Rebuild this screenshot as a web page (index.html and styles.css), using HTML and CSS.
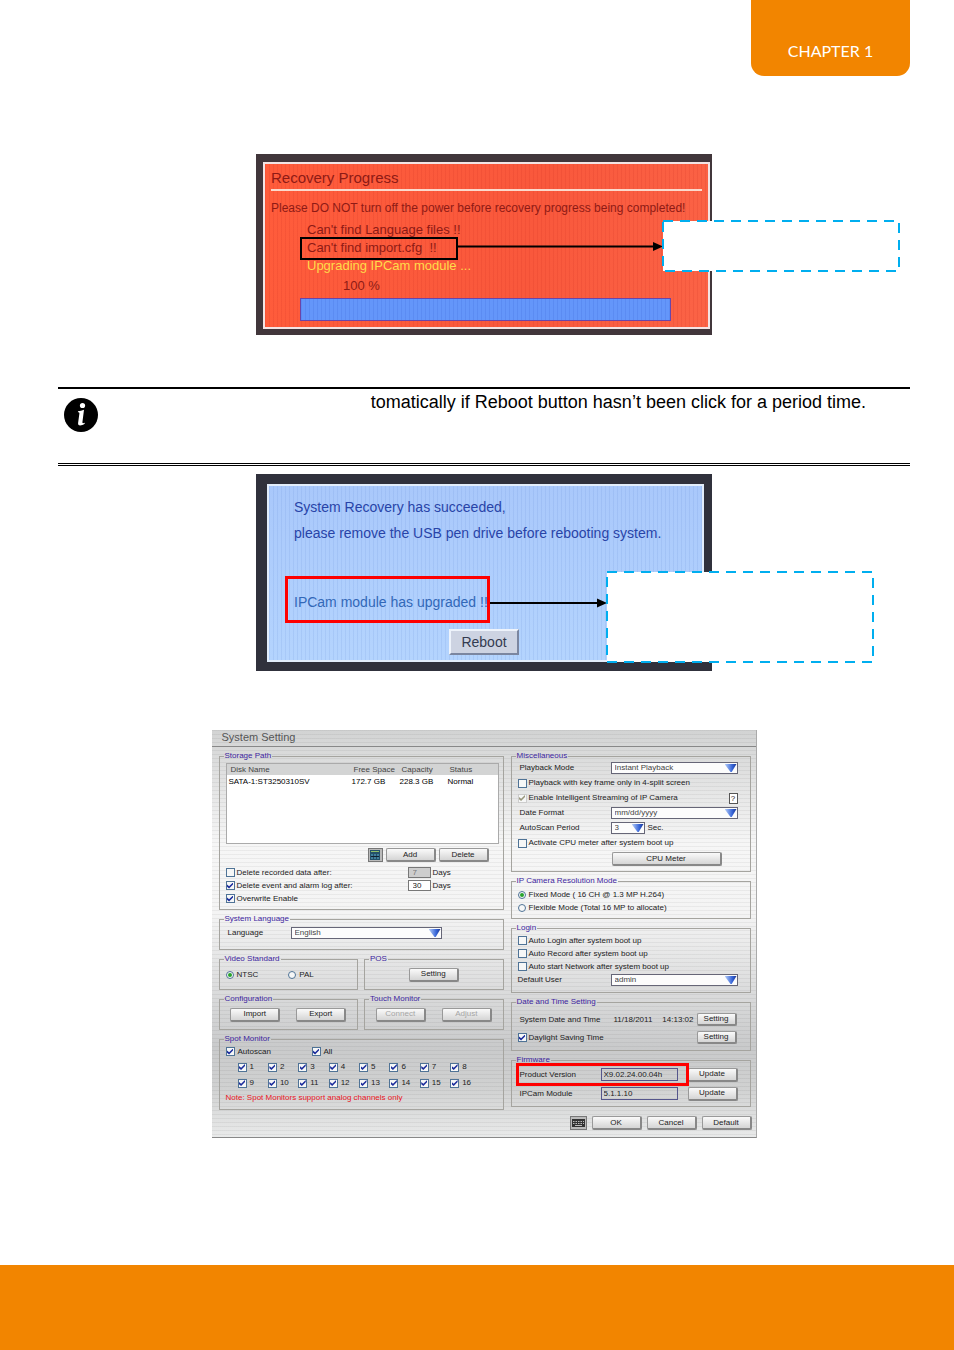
FILE: index.html
```html
<!DOCTYPE html>
<html lang="en">
<head>
    <meta charset="UTF-8">
    <meta name="viewport" content="width=device-width, initial-scale=1.0">
    <title>Chapter 1</title>
    <link rel="stylesheet" href="styles.css">
</head>
<body>
    <header class="page-header">
        <div class="chapter-tab">CHAPTER 1</div>
    </header>

    <main class="page-content">
        <figure class="photo photo-progress">
            <div class="screen screen-red">
                <h2>Recovery Progress</h2>
                <p class="warning">Please DO NOT turn off the power before recovery progress being completed!</p>
                <ul class="messages">
                    <li>Can't find Language files !!</li>
                    <li>Can't find import.cfg &nbsp;!!</li>
                    <li class="active">Upgrading IPCam module ...</li>
                </ul>
                <div class="percent">100 %</div>
                <div class="bar"></div>
            </div>
            <svg class="annotation" aria-hidden="true">
                <rect x="45" y="84" width="156" height="21" fill="none" stroke="#000" stroke-width="2"/>
                <path d="M202 92.500H400" stroke="#000" stroke-width="2"/>
                <path d="M397 88l10 4.500-10 4.500z" fill="#000"/>
                <rect x="407" y="67" width="236" height="50" fill="#fff" stroke="#00aeef" stroke-width="2" stroke-dasharray="10 7"/>
            </svg>
        </figure>

        <section class="note">
            <svg class="note-icon" viewBox="0 0 34 34" aria-hidden="true">
                <circle cx="17" cy="17" r="17" fill="#000"/>
                <circle cx="18.500" cy="7.500" r="2.600" fill="#fff"/>
                <path d="M14 13.200c2-.2 4-.6 6-1.400l-1.600 12.400c-.1 1 .6 1.300 2.300.6v.9c-1.500 1.100-3.200 1.700-4.600 1.700-1.600 0-2.200-.9-2-2.400l1.300-9.400c.1-1-.3-1.300-1.500-1.300z" fill="#fff"/>
            </svg>
            <p>tomatically if Reboot button hasn’t been click for a period time.</p>
        </section>

        <figure class="photo photo-done">
            <div class="screen screen-blue">
                <p>System Recovery has succeeded,</p>
                <p>please remove the USB pen drive before rebooting system.</p>
                <p class="upgraded">IPCam module has upgraded !!</p>
                <button type="button" class="reboot">Reboot</button>
            </div>
            <svg class="annotation" aria-hidden="true">
                <rect x="30.500" y="103.500" width="202" height="44" fill="none" stroke="#f00" stroke-width="3"/>
                <path d="M234 129H344" stroke="#000" stroke-width="2"/>
                <path d="M341 124.500l10 4.500-10 4.500z" fill="#000"/>
                <rect x="351" y="98" width="266" height="90" fill="#fff" stroke="#00aeef" stroke-width="2" stroke-dasharray="10 7"/>
            </svg>
        </figure>

        <form class="window">
            <h2>System Setting</h2>
            <div class="columns">
                <div class="column">
                    <fieldset class="storage">
                        <legend>Storage Path</legend>
                        <div class="disk-list">
                            <table>
                                <thead>
                                    <tr><th class="disk">Disk Name</th><th class="size">Free Space</th><th class="size">Capacity</th><th>Status</th></tr>
                                </thead>
                                <tbody>
                                    <tr><td>SATA-1:ST3250310SV</td><td>172.7 GB</td><td>228.3 GB</td><td>Normal</td></tr>
                                </tbody>
                            </table>
                        </div>
                        <div class="disk-buttons">
                            <button type="button" class="icon-btn" aria-label="Disk info">
                                <svg width="10" height="10" viewBox="0 0 10 10"><path d="M0 0h10v10H0z" fill="#24516a"/><path d="M1 1.500h8" stroke="#8fc06a"/><path d="M2 4v5M5 4v5M8 4v5" stroke="#5fb4d0"/><path d="M1 6.500h8" stroke="#123"/></svg>
                            </button>
                            <button type="button">Add</button>
                            <button type="button">Delete</button>
                        </div>
                        <div class="option">
                            <input type="checkbox" id="delRec"><label for="delRec" class="grow">Delete recorded data after:</label>
                            <input type="text" class="days" aria-label="Days to keep recorded data" value="7" disabled><span class="unit">Days</span>
                        </div>
                        <div class="option">
                            <input type="checkbox" id="delLog" checked><label for="delLog" class="grow">Delete event and alarm log after:</label>
                            <input type="text" class="days" aria-label="Days to keep logs" value="30"><span class="unit">Days</span>
                        </div>
                        <div class="option">
                            <input type="checkbox" id="overwrite" checked><label for="overwrite">Overwrite Enable</label>
                        </div>
                    </fieldset>

                    <fieldset class="small language">
                        <legend>System Language</legend>
                        <div class="row">
                            <label for="lang" class="name">Language</label>
                            <span class="select"><select id="lang"><option>English</option></select></span>
                        </div>
                    </fieldset>

                    <div class="pair">
                        <fieldset class="small">
                            <legend>Video Standard</legend>
                            <div class="row radios">
                                <span><input type="radio" name="video" id="ntsc" checked><label for="ntsc">NTSC</label></span>
                                <span><input type="radio" name="video" id="pal"><label for="pal">PAL</label></span>
                            </div>
                        </fieldset>
                        <fieldset class="small">
                            <legend>POS</legend>
                            <div class="row centered"><button type="button">Setting</button></div>
                        </fieldset>
                    </div>

                    <div class="pair">
                        <fieldset class="small">
                            <legend>Configuration</legend>
                            <div class="row centered"><button type="button">Import</button><button type="button">Export</button></div>
                        </fieldset>
                        <fieldset class="small">
                            <legend>Touch Monitor</legend>
                            <div class="row centered"><button type="button" disabled>Connect</button><button type="button" disabled>Adjust</button></div>
                        </fieldset>
                    </div>

                    <fieldset class="spot">
                        <legend>Spot Monitor</legend>
                        <div class="option spot-all">
                            <span><input type="checkbox" id="autoscan" checked><label for="autoscan">Autoscan</label></span>
                            <span><input type="checkbox" id="all" checked><label for="all">All</label></span>
                        </div>
                        <div class="channels">
                            <span><input type="checkbox" id="c1" checked><label for="c1">1</label></span>
                            <span><input type="checkbox" id="c2" checked><label for="c2">2</label></span>
                            <span><input type="checkbox" id="c3" checked><label for="c3">3</label></span>
                            <span><input type="checkbox" id="c4" checked><label for="c4">4</label></span>
                            <span><input type="checkbox" id="c5" checked><label for="c5">5</label></span>
                            <span><input type="checkbox" id="c6" checked><label for="c6">6</label></span>
                            <span><input type="checkbox" id="c7" checked><label for="c7">7</label></span>
                            <span><input type="checkbox" id="c8" checked><label for="c8">8</label></span>
                            <span><input type="checkbox" id="c9" checked><label for="c9">9</label></span>
                            <span><input type="checkbox" id="c10" checked><label for="c10">10</label></span>
                            <span><input type="checkbox" id="c11" checked><label for="c11">11</label></span>
                            <span><input type="checkbox" id="c12" checked><label for="c12">12</label></span>
                            <span><input type="checkbox" id="c13" checked><label for="c13">13</label></span>
                            <span><input type="checkbox" id="c14" checked><label for="c14">14</label></span>
                            <span><input type="checkbox" id="c15" checked><label for="c15">15</label></span>
                            <span><input type="checkbox" id="c16" checked><label for="c16">16</label></span>
                        </div>
                        <p class="spot-note">Note: Spot Monitors support analog channels only</p>
                    </fieldset>
                </div>

                <div class="column">
                    <fieldset class="misc">
                        <legend>Miscellaneous</legend>
                        <div class="row">
                            <label for="playback" class="name">Playback Mode</label>
                            <span class="select"><select id="playback"><option>Instant Playback</option></select></span>
                        </div>
                        <div class="row"><input type="checkbox" id="keyframe"><label for="keyframe">Playback with key frame only in 4-split screen</label></div>
                        <div class="row">
                            <input type="checkbox" id="stream" checked disabled><label for="stream" class="grow">Enable Intelligent Streaming of IP Camera</label>
                            <button type="button" class="help">?</button>
                        </div>
                        <div class="row">
                            <label for="dateFmt" class="name">Date Format</label>
                            <span class="select"><select id="dateFmt"><option>mm/dd/yyyy</option></select></span>
                        </div>
                        <div class="row">
                            <label for="period" class="name">AutoScan Period</label>
                            <span class="select narrow"><select id="period"><option>3</option></select></span>
                            <span class="unit">Sec.</span>
                        </div>
                        <div class="row"><input type="checkbox" id="cpu"><label for="cpu">Activate CPU meter after system boot up</label></div>
                        <div class="row cpu-row"><button type="button" class="wide">CPU Meter</button></div>
                    </fieldset>

                    <fieldset class="resolution">
                        <legend>IP Camera Resolution Mode</legend>
                        <div class="option"><input type="radio" name="res" id="fixed" checked><label for="fixed">Fixed Mode ( 16 CH @ 1.3 MP H.264)</label></div>
                        <div class="option"><input type="radio" name="res" id="flex"><label for="flex">Flexible Mode (Total 16 MP to allocate)</label></div>
                    </fieldset>

                    <fieldset class="login">
                        <legend>Login</legend>
                        <div class="option"><input type="checkbox" id="autoLogin"><label for="autoLogin">Auto Login after system boot up</label></div>
                        <div class="option"><input type="checkbox" id="autoRec"><label for="autoRec">Auto Record after system boot up</label></div>
                        <div class="option"><input type="checkbox" id="autoNet"><label for="autoNet">Auto start Network after system boot up</label></div>
                        <div class="row">
                            <label for="user" class="name flush">Default User</label>
                            <span class="select"><select id="user"><option>admin</option></select></span>
                        </div>
                    </fieldset>

                    <fieldset class="datetime">
                        <legend>Date and Time Setting</legend>
                        <div class="row">
                            <span class="name">System Date and Time</span>
                            <span class="clock"><span>11/18/2011</span><span>14:13:02</span></span>
                            <button type="button" class="mini">Setting</button>
                        </div>
                        <div class="row">
                            <input type="checkbox" id="dst" checked><label for="dst" class="grow">Daylight Saving Time</label>
                            <button type="button" class="mini">Setting</button>
                        </div>
                    </fieldset>

                    <fieldset class="firmware">
                        <legend>Firmware</legend>
                        <div class="row marked">
                            <label for="version" class="name">Product Version</label>
                            <input type="text" id="version" class="version" value="X9.02.24.00.04h" readonly>
                            <button type="button">Update</button>
                        </div>
                        <div class="row">
                            <label for="ipcam" class="name">IPCam Module</label>
                            <input type="text" id="ipcam" class="version" value="5.1.1.10" readonly>
                            <button type="button">Update</button>
                        </div>
                    </fieldset>
                </div>
            </div>
            <div class="window-buttons">
                <button type="button" class="icon-btn keyboard" aria-label="Keyboard">
                    <svg width="13" height="8" viewBox="0 0 13 8"><path d="M0 0h13v8H0z" fill="#333"/><path d="M1 2.500h11M1 4.500h11" stroke="#bbb" stroke-dasharray="1.500 1"/><path d="M3 6.500h7" stroke="#bbb"/></svg>
                </button>
                <button type="button">OK</button>
                <button type="button">Cancel</button>
                <button type="button">Default</button>
            </div>
        </form>
    </main>

    <footer class="page-footer"></footer>
</body>
</html>
```
FILE: styles.css
```css
* {
    box-sizing: border-box;
}
body {
    margin: 0;
    min-height: 100vh;
    display: flex;
    flex-direction: column;
    background: #fff;
    color: #000;
    font-family: "Liberation Sans", Arial, sans-serif;
}
h2, p, ul, figure {
    margin: 0;
    padding: 0;
}
.page-header {
    display: flex;
    justify-content: flex-end;
    padding: 0 44px;
}
.chapter-tab {
    width: 159px;
    height: 76px;
    padding-top: 40px;
    border-radius: 0 0 13px 13px;
    background: #f28500;
    color: #fff;
    font-family: Lato, sans-serif;
    font-size: 16px;
    line-height: 22px;
    text-align: center;
}
.page-content {
    flex: 1;
    padding: 78px 44px 0 58px;
}
.page-footer {
    height: 85px;
    background: #f28500;
}

/* photographed screens */
.photo {
    position: relative;
    max-width: 456px;
    margin: 0 auto;
}
.photo-progress {
    padding: 8px 2px 6px 7px;
    background: #41363b;
}
.photo-done {
    padding: 10px 8px 9px 11px;
    background: #30313c;
}
.annotation {
    position: absolute;
    top: 0;
    left: 0;
    width: 100%;
    height: 100%;
    overflow: visible;
}
.screen {
    border: 2px solid #f3e4e4;
}
.screen-red {
    padding: 5px 6px 6px;
    background: repeating-linear-gradient(90deg, rgba(190, 30, 20, 0.12) 0 1px, transparent 1px 4px), linear-gradient(100deg, #ff5c3b, #f9583c 60%, #fb6346);
    color: #8e1a15;
}
.screen-red h2 {
    padding-bottom: 2px;
    border-bottom: 2px solid #fbd9cc;
    font-size: 15px;
    font-weight: normal;
    line-height: 18px;
}
.warning {
    margin-top: 8px;
    font-size: 12px;
    line-height: 18px;
    white-space: nowrap;
}
.messages {
    margin-top: 4px;
    padding-left: 36px;
    list-style: none;
    font-size: 13px;
    line-height: 18px;
}
.messages .active {
    color: #ffdc4a;
}
.percent {
    padding-left: 72px;
    font-size: 13px;
    line-height: 22px;
}
.bar {
    height: 23px;
    margin: 1px 31px 0 29px;
    border: 1px solid #6a45a8;
    background: repeating-linear-gradient(90deg, rgba(40, 80, 200, 0.15) 0 1px, transparent 1px 4px), #6496fa;
}
.screen-blue {
    padding: 8px 25px 5px;
    border-color: #e2edfb;
    background: repeating-linear-gradient(90deg, rgba(80, 120, 200, 0.12) 0 1px, transparent 1px 4px), linear-gradient(#a9c8fb, #b4d4fe);
    color: #2844a8;
    font-size: 14px;
    line-height: 26px;
    white-space: nowrap;
}
.screen-blue .upgraded {
    margin-top: 43px;
    color: #3268b8;
}
.reboot {
    display: block;
    width: 70px;
    height: 26px;
    margin: 14px 0 0 155px;
    border: 2px solid;
    border-color: #eef3fb #7b86a0 #7b86a0 #eef3fb;
    background: #cdd3e2;
    color: #333b50;
    font: 14px "Liberation Sans", Arial, sans-serif;
}

.note {
    display: flex;
    min-height: 79px;
    margin: 52px 0 8px;
    padding: 0 6px;
    border-top: 2px solid #000;
    border-bottom: 3px double #000;
}
.note-icon {
    width: 34px;
    height: 34px;
    margin-top: 9px;
}
.note p {
    flex: 1;
    padding: 3px 38px 0 0;
    font-size: 18px;
    line-height: 20px;
    text-align: right;
}

/* system setting window */
.window {
    max-width: 545px;
    margin: 59px auto 0;
    padding-bottom: 7px;
    border-right: 1px solid #aaa;
    border-bottom: 1px solid #888;
    background: repeating-linear-gradient(rgba(0, 0, 0, 0.05) 0 1px, transparent 1px 4px), linear-gradient(#d2d3d3, #f6f6f6 28%, #f4f4f4 45%, #c9cacb 78%, #d0d1d1 88%, #e9eaea);
    font-size: 8px;
    line-height: 10px;
    color: #222;
}
.window h2 {
    height: 17px;
    padding-left: 10px;
    border-bottom: 1px solid #888;
    font-size: 11px;
    font-weight: normal;
    line-height: 14px;
    color: #555;
}
.columns {
    display: grid;
    grid-template-columns: minmax(0, 285fr) minmax(0, 240fr);
    gap: 7px;
    padding: 5px 5px 0 7px;
}
.column {
    display: flex;
    flex-direction: column;
    gap: 5px;
}
fieldset {
    min-width: 0;
    margin: 0;
    padding: 1px 6px 0;
    border: 1px solid #a5a49f;
}
legend {
    margin-left: -2px;
    padding: 0 1px;
    line-height: 8px;
    color: #3d259f;
}
.pair {
    display: grid;
    grid-template-columns: minmax(0, 1fr) minmax(0, 1fr);
    gap: 6px;
}
.row, .option, .row span, .option span, .channels span {
    display: flex;
    align-items: center;
}
.row {
    height: 14px;
    margin-bottom: 1px;
}
.option {
    height: 13px;
}
.grow {
    flex: 1;
}
.name {
    width: 93px;
    padding-left: 2px;
}
.flush {
    padding-left: 0;
}
.unit {
    width: 48px;
    padding-left: 3px;
}

input, select, button {
    margin: 0;
    padding: 0;
    font: 8px/10px "Liberation Sans", Arial, sans-serif;
    color: #222;
}
input[type="checkbox"], input[type="radio"] {
    appearance: none;
    flex: none;
    display: grid;
    place-items: center;
    width: 9px;
    height: 9px;
    margin-right: 2px;
    border: 1px solid #4f7396;
    background: #f6f7f7;
}
input[type="checkbox"]:checked::before {
    content: "";
    width: 6px;
    height: 6px;
    background: #1b2c9c;
    clip-path: polygon(0 35%, 35% 62%, 100% 0, 100% 35%, 35% 100%, 0 70%);
}
input[type="checkbox"]:disabled {
    border-color: #ccc;
}
input[type="checkbox"]:disabled::before {
    background: #99977c;
}
input[type="radio"] {
    width: 8px;
    height: 8px;
    margin-right: 3px;
    border-radius: 50%;
}
input[type="radio"]:checked::before {
    content: "";
    width: 4px;
    height: 4px;
    border-radius: 50%;
    background: #27a32c;
}
.window button {
    width: 50px;
    height: 14px;
    border: 1px solid #999;
    border-right: 2px solid #888;
    border-bottom: 2px solid #888;
    border-radius: 2px;
    background: linear-gradient(#fafafa, #d5d5d5);
    line-height: 10px;
}
.window button:disabled {
    color: #a5a5a5;
}
.window .icon-btn {
    display: grid;
    place-items: center;
    width: 15px;
    border: 1px solid #777;
    border-radius: 0;
    background: #bbb;
}
.window .keyboard {
    width: 17px;
}
.window .wide {
    width: 110px;
}
.window .mini {
    width: 40px;
    height: 13px;
}
.window .help {
    width: 9px;
    height: 11px;
    margin-right: 6px;
    border: 1px solid #555;
    border-radius: 0;
    background: #fff;
    line-height: 9px;
}
.select {
    position: relative;
    flex: 1;
    height: 12px;
    margin-right: 6px;
}
.select select {
    appearance: none;
    width: 100%;
    height: 12px;
    padding-left: 3px;
    border: 1px solid #667;
    border-radius: 0;
    background: #fcfcfc;
    color: #444;
}
.select::after {
    content: "";
    position: absolute;
    top: 2px;
    right: 1px;
    width: 12px;
    height: 8px;
    background: linear-gradient(90deg, #b4cdf8, #3765d8 60%, #16308a);
    clip-path: polygon(0 0, 100% 0, 60% 100%, 50% 100%);
    pointer-events: none;
}
.select.narrow {
    flex: none;
    width: 34px;
    margin-right: 0;
}

.disk-list {
    height: 81px;
    margin: 2px -2px 4px 0;
    border: 1px solid #aaa;
    background: #fff;
}
.disk-list table {
    width: 100%;
    table-layout: fixed;
    border-collapse: collapse;
}
.disk-list th {
    height: 11px;
    padding: 0 0 0 4px;
    background: #d3d4d4;
    font-weight: normal;
    text-align: left;
    color: #444;
}
.disk-list td {
    height: 14px;
    padding: 0 0 0 2px;
    color: #000;
}
.disk-list .disk {
    width: 123px;
}
.disk-list .size {
    width: 48px;
}
.disk-buttons {
    display: flex;
    justify-content: flex-end;
    gap: 3px;
    margin-bottom: 4px;
    padding-right: 8px;
}
.storage {
    padding-bottom: 4px;
}
.days {
    width: 23px;
    height: 11px;
    padding-left: 4px;
    border: 1px solid #777;
    background: #fff;
}
.days:disabled {
    background: #cdcdcd;
    color: #777;
}
.option .unit {
    width: 66px;
    padding-left: 2px;
}

.small {
    padding: 4px 6px 7px;
}
.small .row {
    height: 15px;
    margin: 0;
}
.language .name {
    width: 65px;
}
.language .select {
    margin-right: 55px;
}
.language .row {
    height: 12px;
    margin-bottom: 3px;
}
.radios span {
    width: 65px;
}
.centered {
    justify-content: center;
    gap: 16px;
}
.spot {
    padding: 1px 6px 4px;
}
.spot-all {
    height: 15px;
}
.spot-all span {
    width: 86px;
}
.channels {
    display: grid;
    grid-template-columns: repeat(8, 1fr);
    padding: 0 16px 0 12px;
}
.channels span {
    height: 16px;
}
.channels input, .spot-all input {
    margin-right: 3px;
}
.spot-note {
    line-height: 14px;
    color: #e8141c;
}
.misc {
    padding-bottom: 3px;
}
.cpu-row {
    height: 16px;
    padding-left: 94px;
}
.resolution {
    padding: 3px 6px 4px;
}
.login {
    padding: 2px 6px 4px;
}
.datetime {
    padding: 5px 6px 3px;
}
.datetime .row {
    height: 17px;
}
.datetime .mini {
    margin-right: 7px;
}
.clock {
    flex: 1;
    justify-content: space-between;
    padding: 0 3px;
}
.firmware {
    padding: 1px 6px 3px;
}
.firmware .row {
    height: 19px;
    margin: 0;
}
.firmware .name {
    width: 83px;
}
.firmware button {
    margin-right: 6px;
}
.version {
    flex: 1;
    min-width: 0;
    height: 13px;
    margin-right: 10px;
    padding-left: 2px;
    border: 1px solid #56568c;
    background: transparent;
}
.marked {
    position: relative;
}
.marked::after {
    content: "";
    position: absolute;
    inset: -2px 55px -2px -2px;
    border: 3px solid #f00;
    pointer-events: none;
}
.window-buttons {
    display: flex;
    justify-content: flex-end;
    gap: 5px;
    padding: 6px 4px 0;
}
```
